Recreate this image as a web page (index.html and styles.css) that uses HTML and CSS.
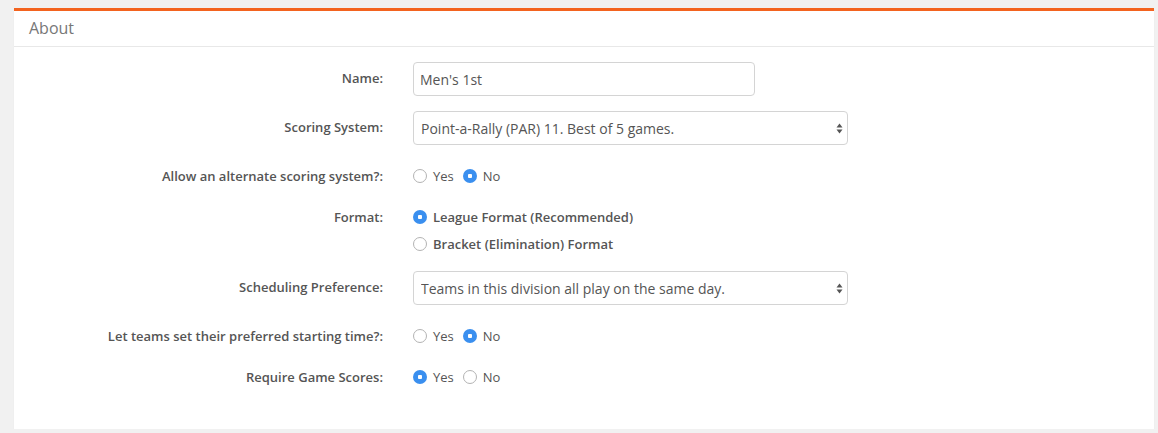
FILE: index.html
```html
<!DOCTYPE html>
<html>
<head>
<meta charset="utf-8">
<link rel="stylesheet" href="styles.css">
</head>
<body>
<div class="panel">
  <div class="panel-heading">About</div>
  <form class="panel-body">
    <div class="row row-input">
      <label class="lbl">Name:</label>
      <div class="field"><input class="text-input" type="text" value="Men's 1st"></div>
    </div>
    <div class="row row-input">
      <label class="lbl">Scoring System:</label>
      <div class="field">
        <div class="select-wrap">
          <select class="select"><option>Point-a-Rally (PAR) 11. Best of 5 games.</option></select>
          <svg class="caret" width="7" height="11" viewBox="0 0 7 11"><path d="M3.5 0.5 L6.5 4.5 L0.5 4.5 Z M3.5 10.5 L6.5 6.5 L0.5 6.5 Z" fill="#555"/></svg>
        </div>
      </div>
    </div>
    <div class="row row-radio">
      <label class="lbl">Allow an alternate scoring system?:</label>
      <div class="field inline">
        <label class="opt"><input type="radio" name="alt"><span>Yes</span></label>
        <label class="opt"><input type="radio" name="alt" checked><span>No</span></label>
      </div>
    </div>
    <div class="row row-radio row-stack">
      <label class="lbl">Format:</label>
      <div class="field stack">
        <label class="opt strong"><input type="radio" name="fmt" checked><span>League Format (Recommended)</span></label>
        <label class="opt strong"><input type="radio" name="fmt"><span>Bracket (Elimination) Format</span></label>
      </div>
    </div>
    <div class="row row-input">
      <label class="lbl">Scheduling Preference:</label>
      <div class="field">
        <div class="select-wrap">
          <select class="select"><option>Teams in this division all play on the same day.</option></select>
          <svg class="caret" width="7" height="11" viewBox="0 0 7 11"><path d="M3.5 0.5 L6.5 4.5 L0.5 4.5 Z M3.5 10.5 L6.5 6.5 L0.5 6.5 Z" fill="#555"/></svg>
        </div>
      </div>
    </div>
    <div class="row row-radio">
      <label class="lbl">Let teams set their preferred starting time?:</label>
      <div class="field inline">
        <label class="opt"><input type="radio" name="pref"><span>Yes</span></label>
        <label class="opt"><input type="radio" name="pref" checked><span>No</span></label>
      </div>
    </div>
    <div class="row row-radio last">
      <label class="lbl">Require Game Scores:</label>
      <div class="field inline">
        <label class="opt"><input type="radio" name="req" checked><span>Yes</span></label>
        <label class="opt"><input type="radio" name="req"><span>No</span></label>
      </div>
    </div>
  </form>
</div>
</body>
</html>
```
FILE: styles.css
```css
html, body {
  margin: 0;
  background: #f1f1f1;
}
body {
  padding: 8px 0 0 14px;
  font-family: "Open Sans", "Liberation Sans", sans-serif;
  color: #555;
}
.panel {
  width: 1140px;
  background: #fff;
  border-top: 3px solid #f3631f;
  box-shadow: 0 1px 1px rgba(0, 0, 0, 0.06);
}
.panel-heading {
  height: 35px;
  line-height: 35px;
  padding-left: 15px;
  font-size: 16px;
  color: #777;
  border-bottom: 1px solid #e8e8e8;
}
.panel-body {
  margin: 0;
  padding: 15px 0 42px 0;
}
.row {
  display: grid;
  grid-template-columns: 369px 1fr;
  column-gap: 30px;
  align-items: start;
  margin-bottom: 15px;
}
.row.last {
  margin-bottom: 0;
}
.lbl {
  text-align: right;
  font-size: 13px;
  font-weight: 600;
  line-height: 20px;
  color: #555;
}
.row-input .lbl {
  padding-top: 6px;
}
.row-radio {
  padding-top: 6px;
}
.row-stack {
  padding-bottom: 2px;
}
.text-input {
  box-sizing: border-box;
  width: 342px;
  height: 34px;
  border: 1px solid #d4d4d4;
  border-radius: 4px;
  padding: 0 6px;
  font-family: "Open Sans", "Liberation Sans", sans-serif;
  font-size: 14px;
  color: #555;
  outline: none;
  display: block;
}
.select-wrap {
  position: relative;
  width: 435px;
}
.select {
  -webkit-appearance: none;
  appearance: none;
  box-sizing: border-box;
  width: 435px;
  height: 34px;
  border: 1px solid #d4d4d4;
  border-radius: 4px;
  padding: 0 7px;
  background: #fff;
  font-family: "Open Sans", "Liberation Sans", sans-serif;
  font-size: 14px;
  color: #555;
  outline: none;
  display: block;
}
.caret {
  position: absolute;
  right: 5px;
  top: 12px;
  pointer-events: none;
}
.field.inline {
  display: flex;
  gap: 9px;
}
.field.stack {
  display: flex;
  flex-direction: column;
  gap: 7px;
}
.opt {
  display: flex;
  align-items: center;
  height: 20px;
  font-size: 13px;
  color: #555;
}
.opt.strong {
  font-weight: 600;
}
.opt input {
  -webkit-appearance: none;
  appearance: none;
  box-sizing: border-box;
  width: 14px;
  height: 14px;
  margin: 0 6px 0 0;
  border: 1px solid #b3b3b3;
  border-radius: 50%;
  background: #fff;
}
.opt input:checked {
  border: none;
  background: radial-gradient(circle, #fff 0 2px, #3a8fef 2.5px);
}
```
